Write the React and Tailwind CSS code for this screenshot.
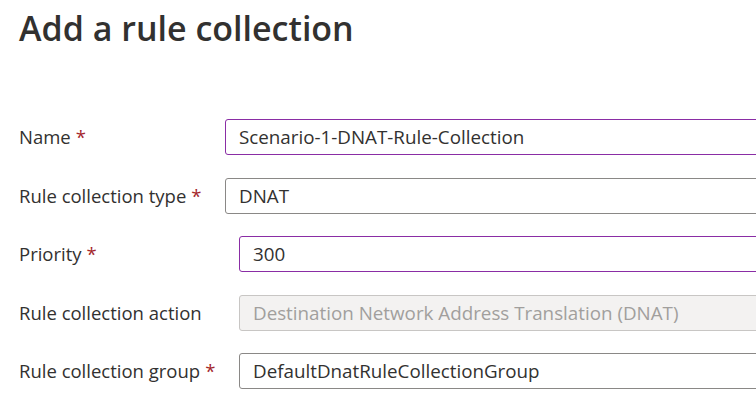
export default function App() {
  const font = { fontFamily: '"Open Sans", "Noto Sans", sans-serif' };
  const Star = () => <span className="text-[#a4262c] ml-[5px]">*</span>;
  const label = "shrink-0 pl-[19px] text-[18.5px]";
  const box = "w-[600px] h-[36px] shrink-0 border rounded-[3px] px-[13px] flex items-center text-[18.8px]";
  return (
    <div className="w-[756px] h-[403px] overflow-hidden bg-white text-[#323130]" style={font}>
      <h1 className="ml-[19px] pt-[4px] text-[34px] leading-[48px] font-semibold whitespace-nowrap">Add a rule collection</h1>
      <div className="flex flex-col mt-[67px]">
        <div className="flex items-center h-[36px] whitespace-nowrap">
          <div className={`w-[225px] ${label}`}>Name<Star /></div>
          <div className={`${box} border-[#8a2da5]`}>Scenario-1-DNAT-Rule-Collection</div>
        </div>
        <div className="flex items-center h-[36px] mt-[23px] whitespace-nowrap">
          <div className={`w-[225px] ${label}`}>Rule collection type<Star /></div>
          <div className={`${box} border-[#8a8886]`}>DNAT</div>
        </div>
        <div className="flex items-center h-[36px] mt-[22px] whitespace-nowrap">
          <div className={`w-[239px] ${label}`}>Priority<Star /></div>
          <div className={`${box} border-[#8a2da5]`}>300</div>
        </div>
        <div className="flex items-center h-[36px] mt-[23px] whitespace-nowrap">
          <div className={`w-[239px] ${label}`}>Rule collection action</div>
          <div className={`${box} border-[#c8c6c4] bg-[#f3f2f1] text-[#a19f9d]`}>Destination Network Address Translation (DNAT)</div>
        </div>
        <div className="flex items-center h-[36px] mt-[22px] whitespace-nowrap">
          <div className={`w-[239px] ${label}`}>Rule collection group<Star /></div>
          <div className={`${box} border-[#8a8886]`}>DefaultDnatRuleCollectionGroup</div>
        </div>
      </div>
    </div>
  );
}
